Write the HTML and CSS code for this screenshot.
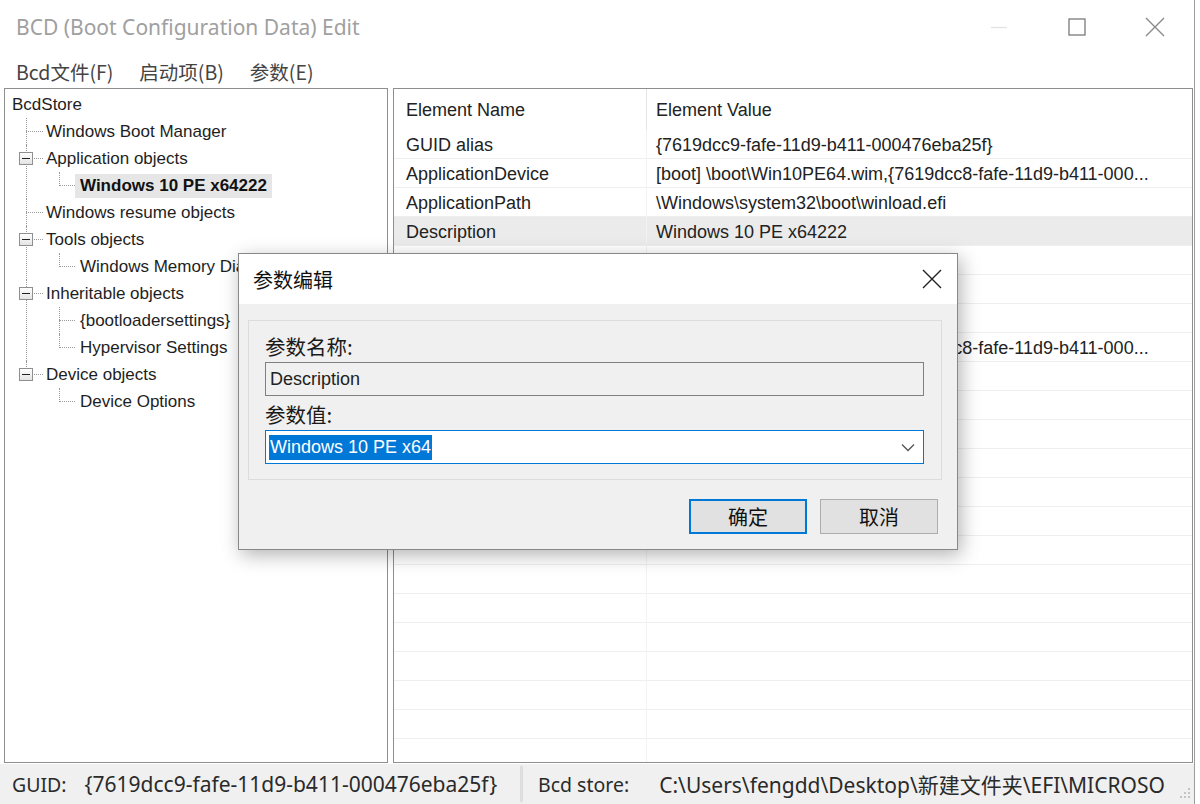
FILE: index.html
```html
<!DOCTYPE html>
<html lang="zh-CN">

<head>
    <meta charset="UTF-8">
    <meta name="viewport" content="width=device-width, initial-scale=1.0">
    <title>BCD (Boot Configuration Data) Edit</title>
    <link rel="stylesheet" href="styles.css">
</head>

<body>
    <div class="window">
        <div class="titlebar">
            <span class="title">BCD (Boot Configuration Data) Edit</span>
            <div class="controls">
                <span class="ctl">
                    <svg width="18" height="18" viewBox="0 0 18 18"><path d="M1 9.5h16" stroke="#e2e2e2" stroke-width="1.2" /></svg>
                </span>
                <span class="ctl">
                    <svg width="18" height="18" viewBox="0 0 18 18"><rect x="1" y="1" width="16" height="16" fill="none" stroke="#7a7a7a" stroke-width="1.3" /></svg>
                </span>
                <span class="ctl">
                    <svg width="20" height="20" viewBox="0 0 20 20"><path d="M1 1L19 19M19 1L1 19" stroke="#8a8a8a" stroke-width="1.4" /></svg>
                </span>
            </div>
        </div>

        <div class="menubar">
            <span>Bcd文件(F)</span>
            <span>启动项(B)</span>
            <span>参数(E)</span>
        </div>

        <div class="main">
            <div class="panel tree">
                <div class="node root">BcdStore</div>
                <ul class="branch lvl1">
                    <li><div class="node">Windows Boot Manager</div></li>
                    <li>
                        <div class="node"><span class="exp"></span>Application objects</div>
                        <ul class="branch lvl2">
                            <li><div class="node"><span class="sel">Windows 10 PE x64222</span></div></li>
                        </ul>
                    </li>
                    <li><div class="node">Windows resume objects</div></li>
                    <li>
                        <div class="node"><span class="exp"></span>Tools objects</div>
                        <ul class="branch lvl2">
                            <li><div class="node">Windows Memory Diagnostic</div></li>
                        </ul>
                    </li>
                    <li>
                        <div class="node"><span class="exp"></span>Inheritable objects</div>
                        <ul class="branch lvl2">
                            <li><div class="node">{bootloadersettings}</div></li>
                            <li><div class="node">Hypervisor Settings</div></li>
                        </ul>
                    </li>
                    <li>
                        <div class="node"><span class="exp"></span>Device objects</div>
                        <ul class="branch lvl2">
                            <li><div class="node">Device Options</div></li>
                        </ul>
                    </li>
                </ul>
            </div>

            <div class="panel grid">
                <div class="grid-head">
                    <div class="cell name">Element Name</div>
                    <div class="cell value">Element Value</div>
                </div>
                <div class="grid-body">
                    <div class="row"><div class="cell name">GUID alias</div><div class="cell value">{7619dcc9-fafe-11d9-b411-000476eba25f}</div></div>
                    <div class="row"><div class="cell name">ApplicationDevice</div><div class="cell value">[boot] \boot\Win10PE64.wim,{7619dcc8-fafe-11d9-b411-000...</div></div>
                    <div class="row"><div class="cell name">ApplicationPath</div><div class="cell value">\Windows\system32\boot\winload.efi</div></div>
                    <div class="row selected"><div class="cell name">Description</div><div class="cell value">Windows 10 PE x64222</div></div>
                    <div class="row"><div class="cell name">Locale</div><div class="cell value">zh-CN</div></div>
                    <div class="row"><div class="cell name">Inherit</div><div class="cell value">{bootloadersettings}</div></div>
                    <div class="row"><div class="cell name">NoIntegrityChecks</div><div class="cell value">Yes</div></div>
                    <div class="row"><div class="cell name">OSDevice</div><div class="cell value">[boot] \boot\Win10PE64.wim,{7619dcc8-fafe-11d9-b411-000...</div></div>
                    <div class="row"><div class="cell name">SystemRoot</div><div class="cell value">\Windows</div></div>
                    <div class="row"><div class="cell name">DetectHal</div><div class="cell value">Yes</div></div>
                    <div class="row"><div class="cell name">WinPE</div><div class="cell value">Yes</div></div>
                    <div class="row"><div class="cell name">Ems</div><div class="cell value">No</div></div>
                    <div class="row"><div class="cell name"></div><div class="cell value"></div></div>
                    <div class="row"><div class="cell name"></div><div class="cell value"></div></div>
                    <div class="row"><div class="cell name"></div><div class="cell value"></div></div>
                    <div class="row"><div class="cell name"></div><div class="cell value"></div></div>
                    <div class="row"><div class="cell name"></div><div class="cell value"></div></div>
                    <div class="row"><div class="cell name"></div><div class="cell value"></div></div>
                    <div class="row"><div class="cell name"></div><div class="cell value"></div></div>
                    <div class="row"><div class="cell name"></div><div class="cell value"></div></div>
                    <div class="row"><div class="cell name"></div><div class="cell value"></div></div>
                    <div class="row"><div class="cell name"></div><div class="cell value"></div></div>
                </div>
            </div>
        </div>

        <div class="statusbar">
            <div class="status-part first">
                <span class="status-label">GUID:</span>
                <span class="status-value">{7619dcc9-fafe-11d9-b411-000476eba25f}</span>
            </div>
            <div class="status-part">
                <span class="status-label">Bcd store:</span>
                <span class="status-value">C:\Users\fengdd\Desktop\新建文件夹\EFI\MICROSO</span>
            </div>
            <svg class="grip" width="12" height="12" viewBox="0 0 12 12">
                <rect x="9" y="1" width="2" height="2" fill="#c4c4c4" />
                <rect x="5" y="5" width="2" height="2" fill="#c4c4c4" />
                <rect x="9" y="5" width="2" height="2" fill="#c4c4c4" />
                <rect x="1" y="9" width="2" height="2" fill="#c4c4c4" />
                <rect x="5" y="9" width="2" height="2" fill="#c4c4c4" />
                <rect x="9" y="9" width="2" height="2" fill="#c4c4c4" />
            </svg>
        </div>
    </div>

    <!-- modal editor over the main window -->
    <div class="dialog">
        <div class="dialog-title">
            <span>参数编辑</span>
            <svg width="20" height="20" viewBox="0 0 20 20"><path d="M1 1L19 19M19 1L1 19" stroke="#222" stroke-width="1.4" /></svg>
        </div>
        <div class="dialog-body">
            <div class="group">
                <div class="field-label">参数名称:</div>
                <div class="textbox">Description</div>
                <div class="field-label">参数值:</div>
                <div class="combo">
                    <span class="selected-text">Windows 10 PE x64</span>
                    <svg width="14" height="9" viewBox="0 0 14 9"><path d="M1 1.5L7 7.5L13 1.5" fill="none" stroke="#555" stroke-width="1.3" /></svg>
                </div>
            </div>
            <div class="buttons">
                <button class="btn default">确定</button>
                <button class="btn">取消</button>
            </div>
        </div>
    </div>
</body>

</html>
```

FILE: styles.css
```css
body {
    margin: 0;
    width: 1200px;
    height: 804px;
    overflow: hidden;
    background-color: #fff;
    font-family: "Liberation Sans", "Noto Sans CJK SC", sans-serif;
    color: #1e1e1e;
    position: relative;
}

.window {
    width: 1194px;
    height: 804px;
    border-right: 1px solid #9c9c9c;
    display: flex;
    flex-direction: column;
}

.titlebar {
    height: 54px;
    display: flex;
    align-items: center;
    justify-content: space-between;
}

.title {
    padding-left: 16px;
    font-family: "Noto Sans", "Noto Sans CJK SC", sans-serif;
    font-size: 21px;
    color: #a0a0a0;
}

.controls {
    display: flex;
    height: 54px;
}

.ctl {
    width: 78px;
    display: flex;
    align-items: center;
    justify-content: center;
}

.menubar {
    height: 34px;
    display: flex;
    align-items: center;
    gap: 26px;
    padding-left: 16px;
    font-family: "Noto Sans CJK SC", sans-serif;
    font-size: 19.5px;
    color: #444;
}

.main {
    flex: 1;
    display: flex;
    gap: 5px;
    padding-left: 4px;
    padding-right: 1px;
    min-height: 0;
}

.panel {
    border: 1px solid #8e8e8e;
    background-color: #fff;
    overflow: hidden;
}

/* tree view */

.tree {
    width: 382px;
    padding-top: 2px;
    font-size: 17px;
}

.node {
    height: 27px;
    line-height: 27px;
    white-space: nowrap;
    position: relative;
}

.root {
    padding-left: 7px;
}

.branch {
    list-style: none;
    margin: 0;
    padding: 0;
}

.branch > li {
    position: relative;
}

.branch > li::before {
    content: "";
    position: absolute;
    top: 0;
    bottom: 0;
    border-left: 1px dotted #9a9a9a;
}

.branch > li:last-child::before {
    bottom: auto;
    height: 14px;
}

.branch > li::after {
    content: "";
    position: absolute;
    top: 13px;
    border-top: 1px dotted #9a9a9a;
}

.lvl1 > li::before,
.lvl1 > li::after {
    left: 21px;
}

.lvl1 > li::after {
    width: 17px;
}

.lvl1 > li > .node {
    padding-left: 41px;
}

.lvl2 > li::before,
.lvl2 > li::after {
    left: 54px;
}

.lvl2 > li::after {
    width: 16px;
}

.lvl2 > li > .node {
    padding-left: 75px;
}

.exp {
    position: absolute;
    left: 14px;
    top: 7px;
    width: 12px;
    height: 11px;
    border: 1px solid #8f8f8f;
    background: linear-gradient(#fff, #e4e4e4);
    z-index: 1;
}

.exp::after {
    content: "";
    position: absolute;
    left: 2px;
    top: 5px;
    width: 8px;
    height: 1px;
    background-color: #222;
}

.sel {
    display: inline-block;
    margin-left: -5px;
    padding: 0 5px;
    height: 24px;
    line-height: 24px;
    background-color: #e6e6e6;
    font-weight: bold;
    color: #111;
}

/* element grid */

.grid {
    flex: 1;
    font-size: 18px;
    color: #222;
}

.grid-head {
    height: 41px;
    display: flex;
}

.grid-head .cell {
    line-height: 43px;
}

.grid-head .name {
    border-right: 1px solid #e4e4e4;
}

.row {
    height: 29px;
    display: flex;
    border-bottom: 1px solid #efefef;
    box-sizing: border-box;
}

.row .cell {
    line-height: 30px;
}

.row .name {
    border-right: 1px solid #f2f2f2;
}

.row.selected {
    background-color: #ebebeb;
}

.cell {
    white-space: nowrap;
    overflow: hidden;
}

.cell.name {
    width: 240px;
    padding-left: 12px;
}

.cell.value {
    flex: 1;
    padding-left: 9px;
}

/* status bar */

.statusbar {
    height: 40px;
    margin-top: 1px;
    background-color: #f0f0f0;
    display: flex;
    align-items: center;
    font-family: "Noto Sans", "Noto Sans CJK SC", sans-serif;
    font-size: 19.5px;
    color: #2a2a2a;
    position: relative;
}

.status-part {
    display: flex;
    align-items: center;
    gap: 18px;
    padding-left: 12px;
    white-space: nowrap;
}

.status-value {
    font-size: 21px;
}

.status-part.first {
    width: 508px;
    height: 36px;
    border-right: 3px solid #dedede;
    margin-right: 3px;
}

.status-part:not(.first) {
    gap: 30px;
}

.grip {
    position: absolute;
    right: 3px;
    bottom: 5px;
}

/* dialog */

.dialog {
    position: absolute;
    left: 238px;
    top: 253px;
    width: 718px;
    height: 295px;
    border: 1px solid #888;
    background-color: #f0f0f0;
    box-shadow: 3px 5px 18px rgba(0, 0, 0, 0.3);
    font-family: "Noto Sans CJK SC", sans-serif;
}

.dialog-title {
    height: 50px;
    background-color: #fff;
    display: flex;
    align-items: center;
    justify-content: space-between;
    padding: 0 15px 0 14px;
    font-size: 20px;
    color: #111;
}

.dialog-body {
    padding: 16px 15px 0 9px;
}

.group {
    height: 145px;
    border: 1px solid #dcdcdc;
    padding: 13px 17px 0 16px;
}

.field-label {
    height: 24px;
    line-height: 24px;
    font-size: 20.5px;
    color: #1a1a1a;
}

.textbox,
.combo {
    height: 32px;
    margin: 4px 0 6px;
    font-family: "Liberation Sans", sans-serif;
    font-size: 18px;
    display: flex;
    align-items: center;
}

.textbox {
    border: 1px solid #808080;
    background-color: #f0f0f0;
    padding-left: 4px;
    color: #222;
}

.combo {
    border: 1px solid #0078d7;
    background-color: #fff;
    padding: 0 8px 0 3px;
    justify-content: space-between;
}

.selected-text {
    background-color: #0078d7;
    color: #fff;
    line-height: 25px;
    padding: 0 1px;
}

.buttons {
    display: flex;
    justify-content: flex-end;
    gap: 13px;
    margin-top: 19px;
    padding-right: 4px;
}

.btn {
    width: 118px;
    height: 35px;
    background-color: #e1e1e1;
    border: 1px solid #adadad;
    font-family: "Noto Sans CJK SC", sans-serif;
    font-size: 20px;
    color: #111;
    padding: 0;
}

.btn.default {
    border: 2px solid #0078d7;
}
```
